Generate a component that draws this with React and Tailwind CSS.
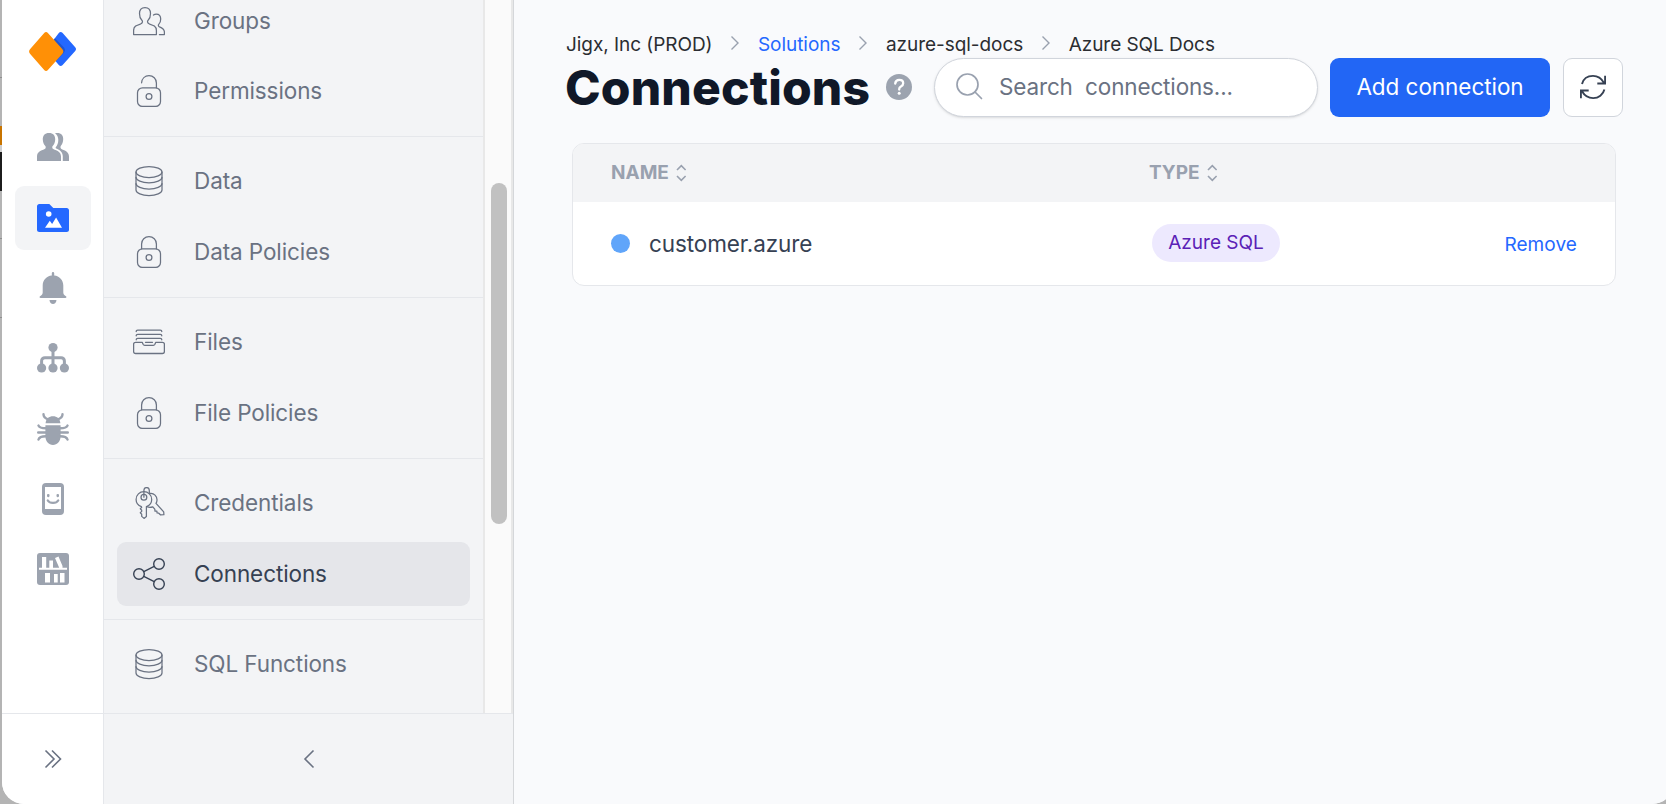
function Svg({ w = 32, h = 32, vb, className = "", children, ...rest }) {
  return (
    <svg width={w} height={h} viewBox={vb || `0 0 ${w} ${h}`} fill="none" className={`shrink-0 ${className}`} {...rest}>
      {children}
    </svg>
  );
}

const line = { stroke: "currentColor", strokeWidth: 1.25, strokeLinecap: "round", strokeLinejoin: "round" };

function GroupsIcon() {
  return (
    <Svg {...line}>
      <path d="M12 2.500c-3.400 0-5.500 2.300-5.500 6 0 3 .8 5.200 2.200 6.500.6.600.9 1.400.7 2.200-.200.900-.900 1.500-1.900 1.800C3.800 20.200.6 21.200.6 25.500v4h22.800v-4c0-4.300-3.200-5.300-6.900-6.500-1-.3-1.700-.9-1.900-1.800-.2-.8.100-1.600.700-2.200 1.400-1.300 2.200-3.500 2.200-6.500 0-3.700-2.100-6-5.500-6z" />
      <path d="M20.500 10c.8-.6 1.700-.9 2.700-.9 2.700 0 4.500 1.700 4.500 5 0 2.300-.6 3.900-1.800 5-.9.900-.6 2.300.6 2.800 2.600 1 4.900 2 4.900 5.200v2.400h-5" />
    </Svg>
  );
}

function LockIcon({ open = false }) {
  return (
    <Svg {...line}>
      <rect x="4.500" y="12.800" width="23" height="18.600" rx="5" />
      {open ? <path d="M8.600 7.800C8.900 3.500 12 .7 16 .7c4.200 0 7.400 3.100 7.400 7.300v4.800" /> : <path d="M8.600 12.800V8C8.600 3.800 11.800.7 16 .7S23.400 3.800 23.400 8v4.800" />}
      <circle cx="16" cy="21.500" r="2.900" />
    </Svg>
  );
}

function DataIcon() {
  return (
    <Svg {...line}>
      <ellipse cx="16" cy="7" rx="13" ry="5.500" />
      <path d="M3 7v18c0 3 5.800 5.500 13 5.500S29 28 29 25V7" />
      <path d="M3 12.300c0 3 5.800 5.500 13 5.500s13-2.500 13-5.500M3 18.500C3 21.500 8.800 24 16 24s13-2.500 13-5.500" />
    </Svg>
  );
}

function FilesIcon() {
  return (
    <Svg {...line} strokeWidth={1.300}>
      <path d="M3.200 5.600c0-1 .6-1.500 1.500-1.500h22.600c.9 0 1.500.5 1.500 1.500M3.200 9.800c0-1 .6-1.500 1.500-1.500h22.600c.9 0 1.500.5 1.500 1.500M3.200 13.800c0-1 .6-1.500 1.500-1.500h22.600c.9 0 1.500.5 1.500 1.500M12.500 16.300h7" />
      <path d="M2.600 16.300h6.600l.9 2c.3.600.9 1 1.600 1h8.600c.7 0 1.300-.4 1.600-1l.9-2h6.600c1.200 0 2 .8 2 2v7.200c0 1.200-.8 2-2 2H2.600c-1.200 0-2-.8-2-2v-7.200c0-1.200.8-2 2-2z" />
    </Svg>
  );
}

function KeysIcon() {
  return (
    <Svg {...line}>
      <path d="M8.400 19.600C5.300 18.400 3.100 15.700 3.100 12.400c0-4.300 3.500-7.800 7.800-7.800s7.800 3.500 7.800 7.800c0 3.300-2.200 6-5.300 7.200v9.800L11 31.400l-2.300-2v-2.200l-1.400-1.400 1.400-1.400v-1.200L7.300 21.800l1.400-1.400z" />
      <circle cx="10.900" cy="10.200" r="2.900" />
      <path d="M10.900 10.200V3.600c0-1.800 1.200-3 2.700-3s2.700 1.200 2.700 3v3.200M17 6.400c3.800-.6 7.300 2.800 7 6.800-.1 1.300-.4 2.300-1 3.200l7.700 8.400.2 2.800-3.500.2-1.600-1.600-1.700-.2-.2-1.800-1.900-.1-.2-2-2.200-2.300c-1.700.7-3.700.7-5.700-.1" />
    </Svg>
  );
}

function ShareIcon() {
  return (
    <Svg {...line} strokeWidth={1.400}>
      <circle cx="6" cy="16" r="5.300" />
      <circle cx="26" cy="6" r="5.300" />
      <circle cx="26" cy="26" r="5.300" />
      <path d="m10.800 13.600 10.400-5.200M10.800 18.400l10.400 5.200" />
    </Svg>
  );
}

const groups = [
  [["Groups", GroupsIcon], ["Permissions", () => <LockIcon open />]],
  [["Data", DataIcon], ["Data Policies", LockIcon]],
  [["Files", FilesIcon], ["File Policies", LockIcon]],
  [["Credentials", KeysIcon], ["Connections", ShareIcon]],
  [["SQL Functions", DataIcon]],
];

function MenuRow({ label, Icon }) {
  const active = label === "Connections";
  return (
    <a className={`flex h-16 items-center rounded-[9px] pl-4 ${active ? "bg-[#e5e6ea] text-gray-700" : "text-gray-500"}`}>
      <Icon />
      <span className="ml-[29px] text-[22.500px] leading-8 tracking-[-0.100px]">{label}</span>
    </a>
  );
}

const railIcons = [
  <Svg fill="currentColor" className="mb-px">
    <path d="M12 2c-4.200 0-6.400 2.700-6.200 6.500.1 2.800 1 5 2.500 6.600.6.600.6 2.200-.2 2.700C5 19.600 0 20.200 0 25.600V30h24v-4.400c0-5.400-5-6-8.100-7.800-.8-.5-.8-2.100-.2-2.700 1.500-1.600 2.400-3.800 2.500-6.600C18.400 4.700 16.200 2 12 2z" />
    <path d="M18 2.300c.7-.2 1.500-.3 2.300-.3 4 0 6.100 2.500 5.900 6.300-.1 2.700-.9 4.800-2.300 6.500-.6.700-.6 2.400.2 2.900 3 1.800 7.900 2.500 7.900 7.900V30h-6.200v-4.400c0-4.300-2.600-6.600-7-8.300-.3-.2-.3-.7 0-1 1.500-1.900 2.500-4.200 2.500-7.300 0-2.800-1.200-5.200-3.300-6.700z" />
  </Svg>,
  <Svg>
    <path fill="#2468ff" d="M2.300 2h10l4 4H29.700C31 6 32 7 32 8.300v19.400c0 1.300-1 2.300-2.300 2.300H2.300C1 30 0 29 0 27.700V4.300C0 3 1 2 2.300 2z" />
    <circle cx="11.700" cy="12" r="2.800" fill="#fff" />
    <path fill="#fff" d="m8 25.700 4.800-7 2.300 3.300 4-6.600 5.900 10.300z" />
  </Svg>,
  <Svg fill="currentColor">
    <path d="M14.800 1.200a1.200 1.200 0 0 1 2.400 0v2.200c5.200.5 9.100 4.500 9.100 10v7.200c0 1.500.8 2.800 2.300 3.500 1.300.6 1.100 2-.4 2H3.800c-1.500 0-1.700-1.400-.4-2 1.500-.7 2.300-2 2.300-3.500v-7.200c0-5.500 3.900-9.500 9.100-10z" />
    <path d="M12.500 28h7c-.2 2.500-1.700 4-3.500 4s-3.300-1.500-3.500-4z" />
  </Svg>,
  <Svg fill="currentColor">
    <circle cx="16" cy="5.600" r="4.600" /><circle cx="4.600" cy="26" r="4.600" /><circle cx="16" cy="26" r="4.600" /><circle cx="27.400" cy="26" r="4.600" />
    <path d="M16 8v16M4.600 24v-5c0-1.900 1.400-3.300 3.300-3.300h16.200c1.900 0 3.300 1.400 3.300 3.300v5" fill="none" stroke="currentColor" strokeWidth="3" />
  </Svg>,
  <Svg fill="currentColor" stroke="currentColor" strokeLinecap="round" strokeWidth="2.400">
    <path stroke="none" d="M8.600 10.200C8.900 5.600 12 3.200 16 3.200s7.100 2.400 7.400 7zM8.400 12.300h15.200V23c0 5.400-3.400 9-7.600 9s-7.600-3.600-7.600-9z" />
    <path fill="none" d="M6.500 1.300c0 2 1.600 4 4.500 5M25.500 1.300c0 2-1.600 4-4.500 5M1.500 12.600c.8 2 3 2.600 7.500 2.600M1.200 19.500H9M1.500 26.500c.8-2.600 3.400-3.300 7.500-3.300M30.500 12.600c-.8 2-3 2.600-7.500 2.600M30.800 19.500H23M30.500 26.500c-.8-2.600-3.400-3.300-7.500-3.300" />
  </Svg>,
  <Svg>
    <rect x="5" width="22" height="32" rx="4" fill="currentColor" />
    <path fill="#fff" d="M8 4h16v22H8z" />
    <rect x="10" y="11" width="2.500" height="3.200" rx="1.100" fill="currentColor" />
    <rect x="19.500" y="11" width="2.500" height="3.200" rx="1.100" fill="currentColor" />
    <path d="M10.800 17.500c2 3.200 8.400 3.200 10.400 0" stroke="currentColor" strokeWidth="2.300" strokeLinecap="round" />
  </Svg>,
  <Svg>
    <rect width="32" height="32" rx="3" fill="currentColor" />
    <path fill="#fff" d="M2 14.800h28v2H2zM5 4h4.200v11H5zM12.300 7.500h3.700V15h-3.700zM18 5l3.500-1.500L25.500 13v2h-3.200zM8 20h5v9.500H8zM17 21h3.700v8.500H17zM23 20h4.500v9.500H23z" />
  </Svg>,
];

function Rail() {
  return (
    <nav className="flex w-[102px] shrink-0 flex-col border-r border-gray-200 bg-white">
      <div className="flex h-[115.600px] shrink-0 items-start pt-7 pl-[26px]">
        <Svg w={50} h={48}>
          <path d="M31 4.800c1-1.100 2.400-1.100 3.400 0L47.200 19.300c1.100 1.200 1.100 2.400 0 3.600L34.400 37.200c-1 1.100-2.400 1.100-3.400 0L18 22z" fill="#2468ff" />
          <path d="M27 10.300 35.700 19.200c1.700 1.900 1.700 3.900 0 5.800l-8 8.200L18 21z" fill="#1f56d2" />
          <path d="M16.200 4.900c1.100-1.200 2.600-1.200 3.700 0L34.200 20.900c1.500 1.700 1.500 3.300 0 5L19.900 42c-1.100 1.200-2.600 1.200-3.700 0L2.200 25.900c-1.500-1.700-1.500-3.300 0-5z" fill="#ff9006" />
        </Svg>
      </div>
      <div className="flex flex-1 flex-col items-center gap-[6.300px] text-[#9ca3af]">
        {railIcons.map((icon, i) => (
          <a key={i} className={`flex h-16 w-[76px] items-center justify-center rounded-[9px] ${i === 1 ? "bg-gray-100" : ""}`}>{icon}</a>
        ))}
      </div>
      <div className="flex h-[91px] items-center justify-center border-t border-gray-200 text-gray-500">
        <Svg w={18} h={20} stroke="currentColor" strokeWidth="1.600"><path d="m1.500 1.500 8.500 8.500-8.500 8.500M8 1.500l8.500 8.500L8 18.500" /></Svg>
      </div>
    </nav>
  );
}

function Sidebar() {
  return (
    <aside className="flex w-[410px] shrink-0 flex-col border-r border-[#d5d7da] bg-gray-100">
      <div className="flex h-[713px]">
        <div className="flex h-full w-[379px] shrink-0 flex-col justify-end overflow-hidden">
          {groups.map((g, i) => (
            <div key={i} className={`flex shrink-0 flex-col px-[13px] pt-3 ${i === 0 ? "gap-1.5" : "gap-[7px]"} ${i < 4 ? "border-b border-gray-200 pb-[13px]" : "pb-[17px]"}`}>
              {g.map(([label, Icon]) => <MenuRow key={label} label={label} Icon={Icon} />)}
            </div>
          ))}
        </div>
        <div className="h-full flex-1 border-r-2 border-l-2 border-[#e8e8e8] bg-[#fafafa] pt-[183px] pl-1.5">
          <div className="h-[341px] w-4 rounded-full bg-[#c1c1c1]" />
        </div>
      </div>
      <div className="flex flex-1 items-center justify-center border-t border-gray-200 text-gray-500">
        <Svg w={12} h={20} stroke="currentColor" strokeWidth="1.600"><path d="M10.500 1.500 2 10l8.500 8.500" /></Svg>
      </div>
    </aside>
  );
}

function Crumbs() {
  const items = ["Jigx, Inc (PROD)", "Solutions", "azure-sql-docs", "Azure SQL Docs"];
  return (
    <div className="flex h-[58px] items-end text-[19px] tracking-[-0.050px] text-[#2b2d31]">
      {items.map((t, i) => (
        <div key={t} className="flex items-center">
          {i > 0 && <Svg w={10} h={16} className="mr-[18px] ml-[17.500px] mb-1 text-gray-400" stroke="currentColor" strokeWidth="1.400"><path d="m1.500 1.500 6.500 6.500-6.500 6.500" /></Svg>}
          <span className={`leading-[26px] ${i === 1 ? "text-[#2468ff]" : ""}`}>{t}</span>
        </div>
      ))}
    </div>
  );
}

function Sort() {
  return <Svg w={11} h={18} stroke="currentColor" strokeWidth="1.600" className="ml-[7.500px]"><path d="M1 6l4.300-4.300L9.600 6M1 12l4.300 4.300L9.600 12" /></Svg>;
}

function Main() {
  return (
    <main className="flex h-full w-[1152px] flex-col bg-[#f9fafc] pl-[52px]">
      <Crumbs />
      <div className="flex h-[59px] shrink-0 items-center">
        <h1 className="-ml-px w-[321px] text-[48px] leading-[59px] font-extrabold tracking-[0.150px] text-gray-900">Connections</h1>
        <Svg w={26} h={26} className="mb-px">
          <circle cx="13" cy="13" r="13" fill="#9ca3af" />
          <path d="M9.200 9.500c.3-2.300 1.800-3.600 4-3.600 2.400 0 4 1.300 4 3.300 0 1.800-1 2.600-2.300 3.400-1.200.7-1.700 1.200-1.700 2.400v.6" stroke="#fff" strokeWidth="2.300" strokeLinecap="round" />
          <circle cx="13.200" cy="19.300" r="1.500" fill="#fff" />
        </Svg>
        <div className="ml-[22px] flex h-[59px] w-[384px] items-center rounded-full border border-gray-300 bg-white pb-0.5 pl-[21px] text-gray-500 shadow-sm">
          <Svg w={27} h={27} className="text-gray-400" stroke="currentColor" strokeWidth="1.700" strokeLinecap="round"><circle cx="11.500" cy="11.500" r="10.500" /><path d="m19 19 6.500 6.500" /></Svg>
          <span className="ml-4 text-[22.500px] tracking-[-0.150px] whitespace-pre">Search  connections...</span>
        </div>
        <button className="ml-3 h-[59px] w-[220px] rounded-[9px] bg-[#2266f5] pb-px text-[22.500px] tracking-[-0.050px] text-white">Add connection</button>
        <button className="ml-[13px] flex h-[59px] w-[60px] items-center justify-center rounded-[9px] border border-gray-300 bg-white pb-0.5 text-gray-700">
          <Svg w={26} h={26} stroke="currentColor" strokeWidth="1.900">
            <path d="M2 10C3.300 5 7.600 1.900 13 1.900c5 0 8.500 2.500 11 7M25.100 1.700v7.800h-7.800M24.400 15.500c-1.200 5-5.800 8.600-11.200 8.600-5 0-8.700-2.400-11.200-6.800M.9 24.300v-7.800h7.800" />
          </Svg>
        </button>
      </div>
      <div className="mt-[26px] ml-1.5 h-[143px] w-[1044px] overflow-hidden rounded-xl border border-gray-200 bg-white">
        <div className="flex h-[58px] items-center bg-gray-100 pl-[38px] text-[19px] font-bold text-gray-400">
          <div className="flex w-[538px] items-center">NAME<Sort /></div>
          <div className="flex items-center">TYPE<Sort /></div>
        </div>
        <div className="flex h-[83px] items-center pr-[38px] pl-[38px]">
          <div className="flex w-[541px] items-center text-[22.500px] tracking-[-0.100px] text-gray-700">
            <span className="mr-[19px] size-[19px] rounded-full bg-[#60a5fa]" />customer.azure
          </div>
          <span className="mb-px flex h-[38px] w-[128px] items-center justify-center rounded-full bg-[#ede9fe] text-[19px] text-[#5b21b6]">Azure SQL</span>
          <a className="ml-auto pt-[3px] text-[19px] tracking-[0.080px] text-[#2468ff]">Remove</a>
        </div>
      </div>
    </main>
  );
}

function DesktopEdge() {
  return (
    <div className="flex w-0.5 shrink-0 flex-col">
      <div className="h-[77px]" />
      <div className="h-px bg-[#8f8f8f]" />
      <div className="h-12" />
      <div className="h-[19px] bg-[#c87400]" />
      <div className="h-[7px] bg-[#cfcfcf]" />
      <div className="h-[39px] bg-[#1c1c1c]" />
      <div className="mt-[47px] h-px bg-[#8f8f8f]" />
      <div className="mt-[78px] h-px bg-[#8f8f8f]" />
    </div>
  );
}

export default function App() {
  return (
    <div className="flex h-[804px] w-[1666px] overflow-hidden bg-[#b4b4b4] font-['Inter',sans-serif]">
      <DesktopEdge />
      <div className="flex h-full w-[1672px] shrink-0 overflow-hidden rounded-b-[22px] bg-[#f9fafc]">
        <Rail />
        <Sidebar />
        <Main />
      </div>
    </div>
  );
}
